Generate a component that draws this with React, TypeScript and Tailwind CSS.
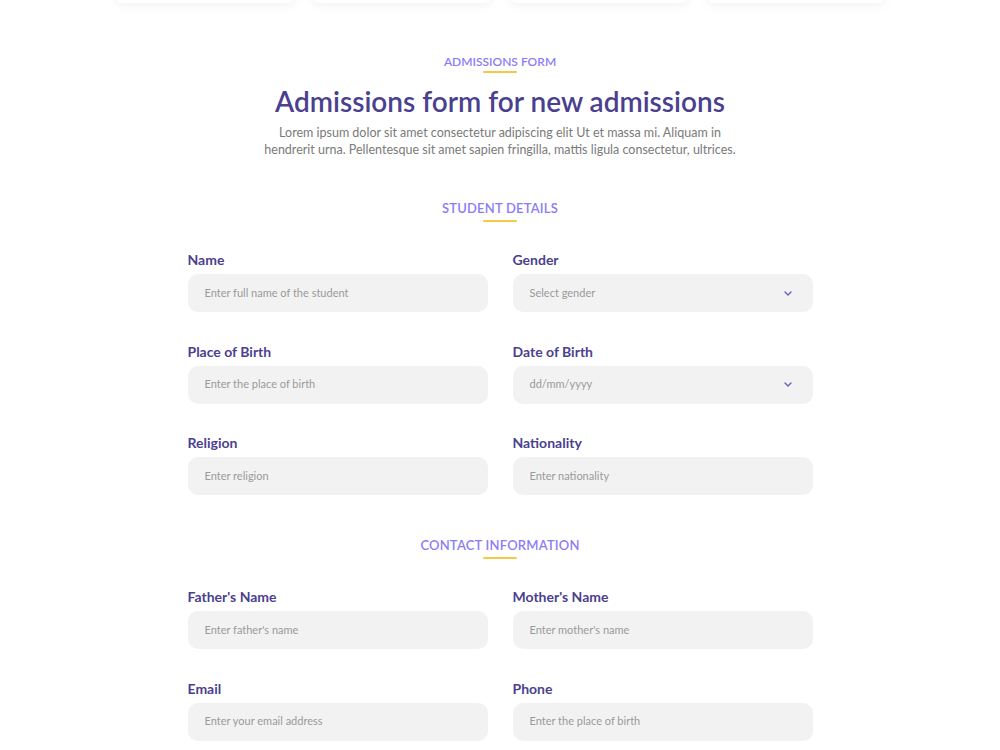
import type { ReactNode } from "react";

const font = { fontFamily: '"Lato", "Open Sans", sans-serif' };

function SectionTitle({ children, className = "" }: { children: ReactNode; className?: string }) {
  return (
    <div className={`flex flex-col items-center ${className}`}>
      <h3 className="text-[13px] leading-[17px] font-semibold uppercase text-[#8b7cf6] tracking-[0.2px]">
        {children}
      </h3>
      <span className="mt-[3px] h-[2px] w-[34px] rounded-full bg-[#f7c843]" />
    </div>
  );
}

function Chevron() {
  return (
    <svg width="8" height="5" viewBox="0 0 8 5" fill="none" className="text-[#6a5cc4]">
      <path d="M1 1l3 3 3-3" stroke="currentColor" strokeWidth="1.4" strokeLinecap="round" strokeLinejoin="round" />
    </svg>
  );
}

function Field({ label, placeholder, select }: { label: string; placeholder: string; select?: boolean }) {
  return (
    <div className="flex flex-col">
      <label className="text-[14px] leading-[18px] font-bold text-[#4b3f8f] mb-[5px]">{label}</label>
      <div className="h-[38px] rounded-[10px] bg-[#f2f2f2] flex items-center justify-between pl-[17px] pr-[21px]">
        <span className="text-[11px] text-[#9a9a9a]">{placeholder}</span>
        {select && <Chevron />}
      </div>
    </div>
  );
}

export default function App() {
  return (
    <div className="min-h-screen w-full bg-white overflow-hidden" style={font}>
      {/* card row above, only the bottom edge shows */}
      <div className="flex justify-center gap-[17px] -mt-[40px]">
        {[0, 1, 2, 3].map((i) => (
          <div key={i} className="w-[180px] h-[43px] bg-white rounded-[8px] shadow-[0_3px_10px_rgba(0,0,0,0.05)]" />
        ))}
      </div>

      <div className="flex flex-col items-center mt-[52px]">
        <p className="text-[12px] leading-[14px] font-semibold uppercase text-[#8b7cf6]">Admissions form</p>
        <span className="mt-[2px] h-[2px] w-[34px] rounded-full bg-[#f7c843]" />
        <h1 className="mt-[11px] text-[28px] leading-[34px] font-semibold text-[#4b3f8f]">
          Admissions form for new admissions
        </h1>
        <p className="mt-[6px] text-[12.5px] leading-[17px] text-[#7a7a7a] text-center">
          Lorem ipsum dolor sit amet consectetur adipiscing elit Ut et massa mi. Aliquam in
          <br />
          hendrerit urna. Pellentesque sit amet sapien fringilla, mattis ligula consectetur, ultrices.
        </p>
      </div>

      <SectionTitle className="mt-[42px]">Student Details</SectionTitle>

      <div className="mx-auto mt-[29px] w-[625px] grid grid-cols-2 gap-x-[25px] gap-y-[30.5px]">
        <Field label="Name" placeholder="Enter full name of the student" />
        <Field label="Gender" placeholder="Select gender" select />
        <Field label="Place of Birth" placeholder="Enter the place of birth" />
        <Field label="Date of Birth" placeholder="dd/mm/yyyy" select />
        <Field label="Religion" placeholder="Enter religion" />
        <Field label="Nationality" placeholder="Enter nationality" />
      </div>

      <SectionTitle className="mt-[42px]">Contact Information</SectionTitle>

      <div className="mx-auto mt-[29px] w-[625px] grid grid-cols-2 gap-x-[25px] gap-y-[30.5px] pb-10">
        <Field label="Father's Name" placeholder="Enter father's name" />
        <Field label="Mother's Name" placeholder="Enter mother's name" />
        <Field label="Email" placeholder="Enter your email address" />
        <Field label="Phone" placeholder="Enter the place of birth" />
      </div>
    </div>
  );
}
